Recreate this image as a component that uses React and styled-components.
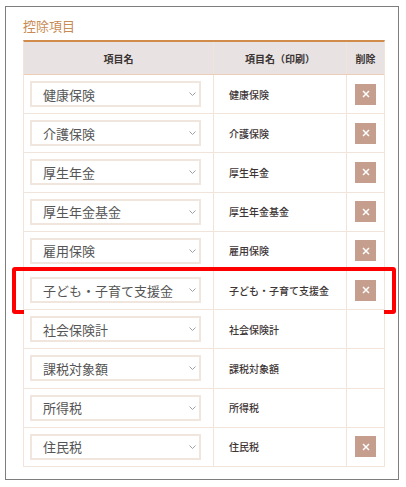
import React from 'react';
import styled, { createGlobalStyle } from 'styled-components';

const GlobalStyle = createGlobalStyle`
  body {
    margin: 0;
    background: #fff;
    font-family: "Noto Sans CJK JP", "Noto Sans", sans-serif;
  }
`

const Frame = styled.section`
  margin: 6px 0 0 5px;
  width: 394px;
  height: 474px;
  box-sizing: border-box;
  border: 1px solid #7d7d7d;
  padding: 10px 13px 0 17px;
`

const Title = styled.h2`
  margin: 0;
  height: 23px;
  font-size: 13px;
  line-height: 18px;
  font-weight: 400;
  color: #c98b55;
`

const Table = styled.div`
  width: 362px;
  border-top: 2px solid #d18c4c;
  border-left: 1px solid #f0e4db;
  border-right: 1px solid #f0e4db;
  box-sizing: border-box;
`

const Row = styled.div`
  position: relative;
  display: grid;
  grid-template-columns: 190px 133px 1fr;
  height: ${p => p.$head ? '33px' : '39.2px'};
  box-sizing: border-box;
  border-bottom: 1px solid ${p => p.$head ? '#ebcdb8' : '#f0e4db'};
  background: ${p => p.$head ? '#e8e3e2' : '#fff'};

  ${p => p.$marked && `
    &::after {
      content: "";
      position: absolute;
      top: -4px;
      bottom: -5px;
      left: -12px;
      right: -12px;
      border: 4px solid #ff0000;
      border-radius: 3px;
      pointer-events: none;
    }
  `}
`

const HeadCell = styled.div`
  display: flex;
  align-items: center;
  justify-content: center;
  font-size: 10px;
  font-weight: 700;
  color: #3a3333;
  border-right: ${p => p.$last ? 'none' : '1px solid #f0e4db'};
`

const Cell = styled.div`
  display: flex;
  align-items: center;
  justify-content: ${p => p.$center ? 'center' : 'flex-start'};
  padding-left: ${p => p.$pad || 0}px;
  border-right: ${p => p.$last ? 'none' : '1px solid #f0e4db'};
  min-width: 0;
`

const Select = styled.div`
  display: flex;
  align-items: center;
  justify-content: space-between;
  width: 171px;
  height: 26px;
  box-sizing: border-box;
  border: 2px solid #f1e6de;
  padding: 0 3px 0 11px;
  font-size: 13px;
  color: #555;
  white-space: nowrap;
  margin-left: 6px;
`

const PrintName = styled.span`
  font-size: 10px;
  font-weight: 500;
  color: #3d3535;
  white-space: nowrap;
`

const DeleteButton = styled.button`
  width: 21px;
  height: 21px;
  padding: 0;
  border: none;
  background: #c59e8d;
  display: flex;
  align-items: center;
  justify-content: center;
  cursor: pointer;
`

const Chevron = () => (
  <svg width="7" height="4" viewBox="0 0 7 4">
    <path d="M0.5 0.5 L3.5 3.5 L6.5 0.5" fill="none" stroke="#a0a0a0" strokeWidth="1" />
  </svg>
)

const Cross = () => (
  <svg width="8" height="8" viewBox="0 0 8 8">
    <path d="M1 1 L7 7 M7 1 L1 7" stroke="#fff" strokeWidth="1.5" />
  </svg>
)

const items = [
  { name: '健康保険', del: true },
  { name: '介護保険', del: true },
  { name: '厚生年金', del: true },
  { name: '厚生年金基金', del: true },
  { name: '雇用保険', del: true },
  { name: '子ども・子育て支援金', del: true, marked: true },
  { name: '社会保険計' },
  { name: '課税対象額' },
  { name: '所得税' },
  { name: '住民税', del: true },
]

export default function App() {
  return (
    <>
      <GlobalStyle />
      <Frame>
        <Title>控除項目</Title>
        <Table>
          <Row $head>
            <HeadCell>項目名</HeadCell>
            <HeadCell>項目名（印刷）</HeadCell>
            <HeadCell $last>削除</HeadCell>
          </Row>
          {items.map(item => (
            <Row key={item.name} $marked={item.marked}>
              <Cell>
                <Select>
                  <span>{item.name}</span>
                  <Chevron />
                </Select>
              </Cell>
              <Cell $pad={15}>
                <PrintName>{item.name}</PrintName>
              </Cell>
              <Cell $center $last>
                {item.del && (
                  <DeleteButton aria-label="削除">
                    <Cross />
                  </DeleteButton>
                )}
              </Cell>
            </Row>
          ))}
        </Table>
      </Frame>
    </>
  )
}
